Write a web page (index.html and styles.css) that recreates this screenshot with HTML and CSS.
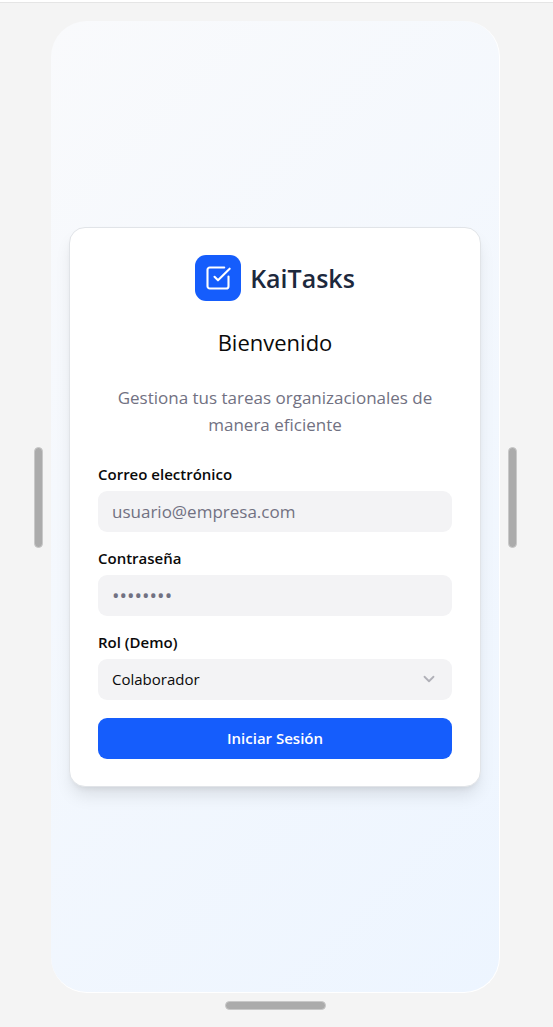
FILE: index.html
```html
<!DOCTYPE html>
<html lang="es">
<head>
<meta charset="utf-8">
<meta name="viewport" content="width=device-width, initial-scale=1">
<title>KaiTasks</title>
<link rel="stylesheet" href="styles.css">
</head>
<body>
<div class="stage">
  <span class="handle handle-side"></span>
  <main class="screen">
    <section class="card">
      <header class="intro">
        <div class="brand">
          <span class="brand-mark">
            <svg width="28" height="28" viewBox="0 0 24 24" fill="none" stroke="currentColor" stroke-width="1.8" stroke-linecap="round" stroke-linejoin="round" aria-hidden="true">
              <path d="M21 10.656V19a2 2 0 0 1-2 2H5a2 2 0 0 1-2-2V5a2 2 0 0 1 2-2h12.344"/>
              <path d="m9 11 3 3L22 4"/>
            </svg>
          </span>
          <h1 class="brand-name">KaiTasks</h1>
        </div>
        <h2 class="welcome">Bienvenido</h2>
        <p class="tagline">Gestiona tus tareas organizacionales de manera eficiente</p>
      </header>
      <form class="form">
        <div class="field">
          <label class="label" for="email">Correo electrónico</label>
          <input class="control" id="email" type="email" placeholder="usuario@empresa.com">
        </div>
        <div class="field">
          <label class="label" for="password">Contraseña</label>
          <input class="control password" id="password" type="password" placeholder="••••••••">
        </div>
        <div class="field">
          <label class="label" for="role">Rol (Demo)</label>
          <div class="select-wrap">
            <select class="control select" id="role">
              <option>Colaborador</option>
            </select>
            <svg class="chevron" width="18" height="18" viewBox="0 0 24 24" fill="none" stroke="currentColor" stroke-width="2.4" stroke-linecap="round" stroke-linejoin="round" aria-hidden="true">
              <path d="m6 9 6 6 6-6"/>
            </svg>
          </div>
        </div>
        <button class="submit" type="submit">Iniciar Sesión</button>
      </form>
    </section>
  </main>
  <span class="handle handle-side"></span>
  <span class="handle handle-bottom"></span>
</div>
</body>
</html>
```
FILE: styles.css
```css
* {
  box-sizing: border-box;
}

body {
  margin: 0;
  padding-top: 2px;
  background: #fff;
  color: #0a0a0a;
  font-family: "Segoe UI", "Open Sans", "Noto Sans", sans-serif;
}

h1, h2, p {
  margin: 0;
}

.stage {
  display: grid;
  grid-template-columns: auto 1fr auto;
  grid-template-rows: 1fr auto;
  gap: 8px;
  align-items: center;
  min-height: calc(100vh - 2px);
  padding: 18px 36px 17px 34px;
  border-top: 1px solid #e5e5e5;
  background: #f4f4f4;
}

.handle {
  border: 1px solid #c8c8c8;
  border-radius: 5px;
  background: #ababab;
}

.handle-side {
  width: 9px;
  height: 101px;
  margin-top: -19px;
}

.handle-bottom {
  grid-column: 2;
  justify-self: center;
  width: 101px;
  height: 9px;
}

.screen {
  display: flex;
  flex-direction: column;
  justify-content: center;
  align-self: stretch;
  padding: 18px;
  border: solid #fff;
  border-width: 0 1px 1px 0;
  border-radius: 36px;
  background: linear-gradient(135deg, #f9fafc, #edf5ff);
}

.card {
  padding: 27px 28px;
  border: 1px solid #e1e4e8;
  border-radius: 16px;
  background: #fff;
  box-shadow: 0 11px 17px -3px rgb(0 0 0 / 10%), 0 4px 7px -4px rgb(0 0 0 / 10%);
}

.intro {
  text-align: center;
}

.brand {
  display: flex;
  align-items: center;
  justify-content: center;
  gap: 9px;
}

.brand-mark {
  display: grid;
  place-items: center;
  width: 46px;
  height: 46px;
  border-radius: 11px;
  background: #155dfc;
  color: #fff;
}

.brand-name {
  color: #1d293d;
  font-size: 25px;
  font-weight: 600;
  line-height: 36px;
}

.welcome {
  margin-top: 27px;
  font-size: 22px;
  font-weight: 400;
  line-height: 28px;
}

.tagline {
  margin-top: 28px;
  color: #717182;
  font-size: 17px;
  line-height: 27px;
}

.form {
  display: flex;
  flex-direction: column;
  gap: 18px;
  margin-top: 28px;
}

.field {
  display: flex;
  flex-direction: column;
  gap: 9px;
}

.label {
  font-size: 15px;
  font-weight: 600;
  line-height: 16px;
}

.control {
  width: 100%;
  height: 41px;
  padding: 0 14px;
  border: 0;
  border-radius: 9px;
  background: #f3f3f5;
  color: #0a0a0a;
  font-family: inherit;
  font-size: 17px;
}

.control::placeholder {
  color: #717182;
  opacity: 1;
}

.password {
  font-size: 20px;
}

.select-wrap {
  display: grid;
  align-items: center;
}

.select-wrap > * {
  grid-area: 1 / 1;
}

.select {
  appearance: none;
  font-size: 15px;
}

.chevron {
  justify-self: end;
  margin-right: 14px;
  color: #b0b0b8;
  pointer-events: none;
}

.submit {
  height: 41px;
  border: 0;
  border-radius: 9px;
  background: #155dfc;
  color: #fff;
  font-family: inherit;
  font-size: 15px;
  font-weight: 600;
}
```
